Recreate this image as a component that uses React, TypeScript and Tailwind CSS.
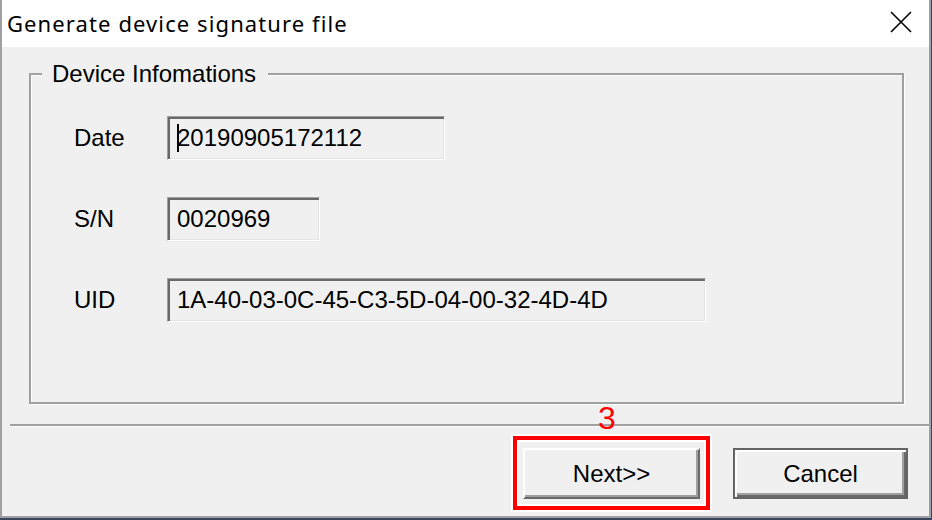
const ui = { fontFamily: '"Liberation Sans", Arial, sans-serif' }

function Field({ label, value, width, caret }: { label: string, value: string, width: string, caret?: boolean }) {
    return (
        <div className='flex items-center'>
            <span className='w-[93px] text-[24px] leading-none'>{label}</span>
            <div
                className={`${width} h-[44px] flex items-center pl-[9px] border border-t-[#a0a0a0] border-l-[#a0a0a0] border-b-white border-r-white bg-[#f0f0f0] shadow-[inset_2px_2px_0_#696969,inset_-1px_-1px_0_#e3e3e3] text-[24px] leading-none`}
            >
                {caret && <span className='inline-block w-[1.5px] h-[28px] bg-black -mr-[1.5px]' />}
                <span>{value}</span>
            </div>
        </div>
    )
}

export default function App() {
    return (
        <div className='w-[932px] h-[520px] bg-[#3a4560]' style={ui}>
            <div className='w-[931px] h-[518px] flex flex-col border-l-2 border-r-2 border-b-2 border-[#a0a0a0] text-black'>
                {/* title bar */}
                <div className='h-[47px] bg-white flex items-center justify-between pl-[5px] pr-[17px]'>
                    <span className='text-[22px] leading-none pb-[2px] tracking-[1.1px]' style={{ fontFamily: '"Noto Sans", "Open Sans", sans-serif' }}>
                        Generate device signature file
                    </span>
                    <svg width='22' height='22' viewBox='0 0 22 22' className='mb-[3px]'>
                        <path d='M1 1 L21 21 M21 1 L1 21' stroke='#000' strokeWidth='1.6' fill='none' />
                    </svg>
                </div>

                <div className='flex-1 bg-[#f0f0f0] flex flex-col'>
                    {/* group box */}
                    <fieldset className='mt-[13px] ml-[27px] mr-[25px] h-[344px] border-2 border-[#a0a0a0] shadow-[inset_1px_1px_0_#fff,1px_1px_0_#fff]'>
                        <legend className='ml-[11px] pl-[10px] pr-[12px] text-[24px] leading-[28px] bg-[#f0f0f0]'>Device Infomations</legend>
                        <div className='mt-[28px] pl-[43px] flex flex-col gap-[37px]'>
                            <Field label='Date' value='20190905172112' width='w-[278px]' caret />
                            <Field label='S/N' value='0020969' width='w-[153px]' />
                            <Field label='UID' value='1A-40-03-0C-45-C3-5D-04-00-32-4D-4D' width='w-[539px]' />
                        </div>
                    </fieldset>

                    {/* separator */}
                    <div className='mt-[20px] ml-[8px] border-t-2 border-t-[#a0a0a0] border-b border-b-white' />

                    {/* buttons */}
                    <div className='mt-[9px] flex justify-end items-start gap-[23px] pr-[21px]'>
                        <div className='relative border-4 border-[#ff0000] shadow-[0_0_0_2px_#fff,inset_0_0_0_2px_#fff] pt-[8px] pb-[7px] px-[6px]'>
                            <span className='absolute -top-[38px] left-[81px] text-[32px] leading-none text-[#ff0000]'>3</span>
                            <button className='w-[177px] h-[51px] bg-[#f0f0f0] border-2 border-t-white border-l-white border-b-[#696969] border-r-[#696969] shadow-[inset_-2px_-2px_0_#a0a0a0] text-[24px] leading-none'>
                                Next&gt;&gt;
                            </button>
                        </div>
                        <button className='mt-[12px] w-[175px] h-[51px] bg-[#f0f0f0] border-2 border-[#646464] shadow-[inset_2px_2px_0_#fff,inset_-2px_-2px_0_#696969,inset_-4px_-4px_0_#a0a0a0] text-[24px] leading-none'>
                            Cancel
                        </button>
                    </div>
                </div>
            </div>
        </div>
    )
}
